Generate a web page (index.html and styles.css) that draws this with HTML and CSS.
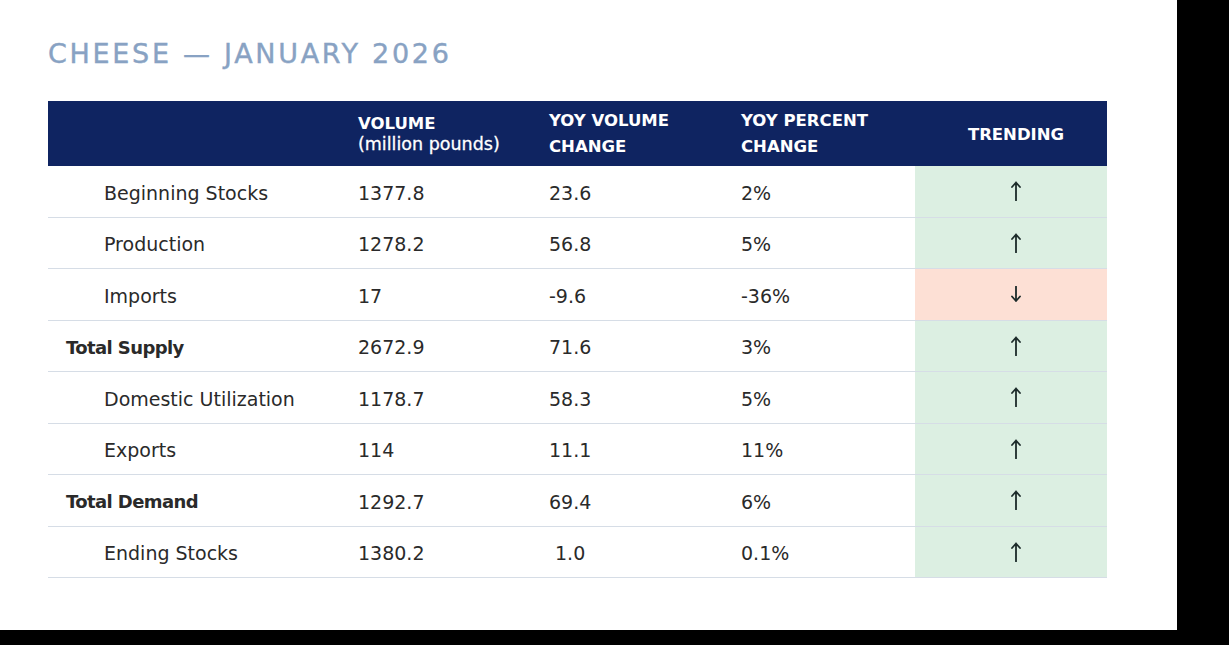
FILE: index.html
```html
<!DOCTYPE html>
<html lang="en">
<head>
<meta charset="utf-8">
<title>Cheese — January 2026</title>
<link rel="stylesheet" href="styles.css">
</head>
<body>
<div class="page">
  <h1 class="title">CHEESE — JANUARY 2026</h1>
  <div class="table">
    <div class="row head">
      <div class="cell"></div>
      <div class="cell h-vol"><span class="h-main">VOLUME</span><span class="h-sub">(million pounds)</span></div>
      <div class="cell h-two"><span>YOY VOLUME</span><span>CHANGE</span></div>
      <div class="cell h-two"><span>YOY PERCENT</span><span>CHANGE</span></div>
      <div class="cell h-trend">TRENDING</div>
    </div>

    <div class="row">
      <div class="cell label sub">Beginning Stocks</div>
      <div class="cell">1377.8</div>
      <div class="cell">23.6</div>
      <div class="cell">2%</div>
      <div class="cell trend up"><svg class="arrow" viewBox="0 0 10 20"><path d="M5 19.5V1.5M1 6L5 1.5L9 6"/></svg></div>
    </div>
    <div class="row">
      <div class="cell label sub">Production</div>
      <div class="cell">1278.2</div>
      <div class="cell">56.8</div>
      <div class="cell">5%</div>
      <div class="cell trend up"><svg class="arrow" viewBox="0 0 10 20"><path d="M5 19.5V1.5M1 6L5 1.5L9 6"/></svg></div>
    </div>
    <div class="row">
      <div class="cell label sub">Imports</div>
      <div class="cell">17</div>
      <div class="cell">-9.6</div>
      <div class="cell">-36%</div>
      <div class="cell trend down"><svg class="arrow short" viewBox="0 0 10 16"><path d="M5 0.5V15M1 10.5L5 15L9 10.5"/></svg></div>
    </div>
    <div class="row">
      <div class="cell label total">Total Supply</div>
      <div class="cell">2672.9</div>
      <div class="cell">71.6</div>
      <div class="cell">3%</div>
      <div class="cell trend up"><svg class="arrow" viewBox="0 0 10 20"><path d="M5 19.5V1.5M1 6L5 1.5L9 6"/></svg></div>
    </div>
    <div class="row">
      <div class="cell label sub">Domestic Utilization</div>
      <div class="cell">1178.7</div>
      <div class="cell">58.3</div>
      <div class="cell">5%</div>
      <div class="cell trend up"><svg class="arrow" viewBox="0 0 10 20"><path d="M5 19.5V1.5M1 6L5 1.5L9 6"/></svg></div>
    </div>
    <div class="row">
      <div class="cell label sub">Exports</div>
      <div class="cell">114</div>
      <div class="cell">11.1</div>
      <div class="cell">11%</div>
      <div class="cell trend up"><svg class="arrow" viewBox="0 0 10 20"><path d="M5 19.5V1.5M1 6L5 1.5L9 6"/></svg></div>
    </div>
    <div class="row">
      <div class="cell label total">Total Demand</div>
      <div class="cell">1292.7</div>
      <div class="cell">69.4</div>
      <div class="cell">6%</div>
      <div class="cell trend up"><svg class="arrow" viewBox="0 0 10 20"><path d="M5 19.5V1.5M1 6L5 1.5L9 6"/></svg></div>
    </div>
    <div class="row">
      <div class="cell label sub">Ending Stocks</div>
      <div class="cell">1380.2</div>
      <div class="cell nudge">1.0</div>
      <div class="cell">0.1%</div>
      <div class="cell trend up"><svg class="arrow" viewBox="0 0 10 20"><path d="M5 19.5V1.5M1 6L5 1.5L9 6"/></svg></div>
    </div>
  </div>
</div>
</body>
</html>
```

FILE: styles.css
```css
html, body {
  margin: 0;
  padding: 0;
  background: #000;
}

body {
  width: 1229px;
  height: 645px;
  overflow: hidden;
}

.page {
  width: 1177px;
  height: 630px;
  background: #fff;
  box-sizing: border-box;
  padding: 40px 0 0 48px;
  font-family: "DejaVu Sans", "Liberation Sans", sans-serif;
  color: #2a2a2a;
}

.title {
  margin: 0 0 34px 0;
  font-size: 27px;
  line-height: 27px;
  font-weight: normal;
  letter-spacing: 2.7px;
  color: #88a2c3;
  -webkit-text-stroke: 0.4px #88a2c3;
}

.table {
  width: 1059px;
}

.row {
  display: grid;
  grid-template-columns: 293px 191px 192px 191px 192px;
  height: 51.5px;
  box-sizing: border-box;
  border-bottom: 1px solid #d6dde6;
}

.cell {
  display: flex;
  align-items: center;
  padding-left: 17px;
  padding-top: 3px;
  font-size: 19px;
  white-space: nowrap;
}

.row.head {
  height: 65px;
  border-bottom: none;
  background: #0f2461;
  color: #fff;
}

.head .cell {
  flex-direction: column;
  align-items: flex-start;
  justify-content: center;
  padding-top: 0;
  font-size: 16.5px;
  font-weight: bold;
}

.h-two span {
  line-height: 26px;
}

.h-vol span {
  line-height: 21px;
}

.h-vol .h-sub {
  font-weight: normal;
  font-size: 17.5px;
  -webkit-text-stroke: 0.3px #fff;
}

.head .h-trend {
  align-items: center;
  padding-left: 10px;
  padding-top: 1px;
}

.label.sub {
  padding-left: 56px;
}

.label.total {
  padding-left: 18px;
  font-weight: bold;
  letter-spacing: -0.6px;
  font-size: 18px;
}

.nudge {
  padding-left: 23px;
}

.trend {
  justify-content: center;
  padding-left: 10px;
  padding-top: 0;
}

.trend.up {
  background: #dcefe2;
}

.trend.down {
  background: #fde0d5;
}

.arrow {
  width: 10px;
  height: 20px;
  fill: none;
  stroke: #1c2b2a;
  stroke-width: 1.8;
  stroke-linecap: round;
  stroke-linejoin: round;
}

.arrow.short {
  height: 16px;
}
```
